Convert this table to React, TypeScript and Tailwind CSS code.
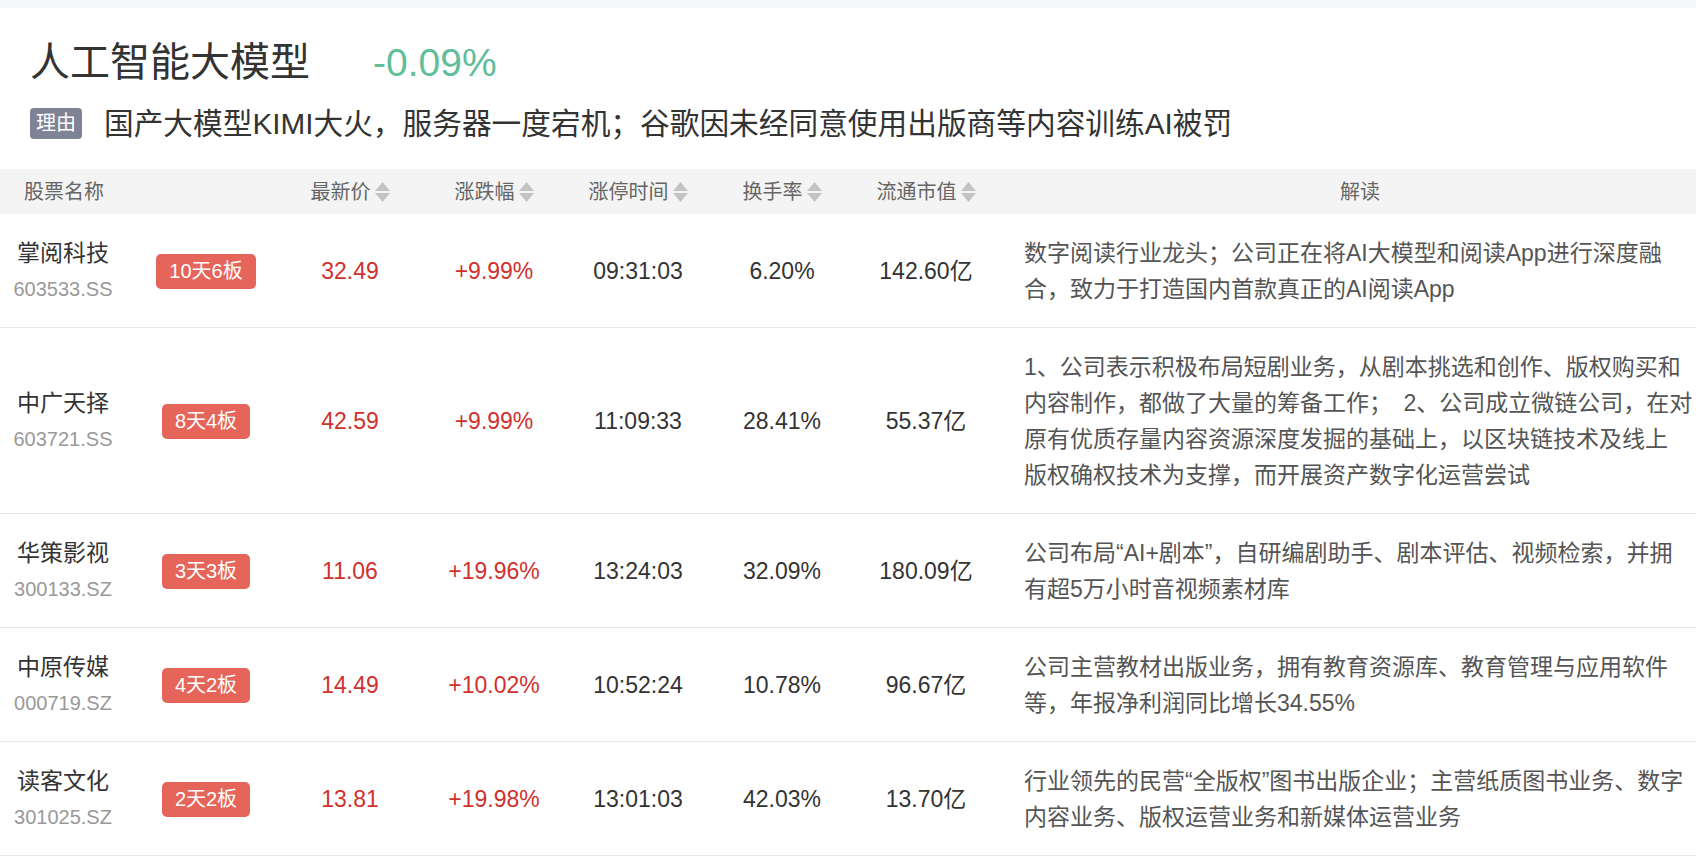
import React from "react";

const FONT = '"Liberation Sans", "Noto Sans CJK SC", Arial, sans-serif';

type Row = {
  name: string;
  code: string;
  tag: string;
  price: string;
  change: string;
  time: string;
  turnover: string;
  cap: string;
  lines: string[];
};

const rows: Row[] = [
  {
    name: "掌阅科技",
    code: "603533.SS",
    tag: "10天6板",
    price: "32.49",
    change: "+9.99%",
    time: "09:31:03",
    turnover: "6.20%",
    cap: "142.60亿",
    lines: [
      "数字阅读行业龙头；公司正在将AI大模型和阅读App进行深度融",
      "合，致力于打造国内首款真正的AI阅读App",
    ],
  },
  {
    name: "中广天择",
    code: "603721.SS",
    tag: "8天4板",
    price: "42.59",
    change: "+9.99%",
    time: "11:09:33",
    turnover: "28.41%",
    cap: "55.37亿",
    lines: [
      "1、公司表示积极布局短剧业务，从剧本挑选和创作、版权购买和",
      "内容制作，都做了大量的筹备工作；\u30002、公司成立微链公司，在对",
      "原有优质存量内容资源深度发掘的基础上，以区块链技术及线上",
      "版权确权技术为支撑，而开展资产数字化运营尝试",
    ],
  },
  {
    name: "华策影视",
    code: "300133.SZ",
    tag: "3天3板",
    price: "11.06",
    change: "+19.96%",
    time: "13:24:03",
    turnover: "32.09%",
    cap: "180.09亿",
    lines: [
      "公司布局“AI+剧本”，自研编剧助手、剧本评估、视频检索，并拥",
      "有超5万小时音视频素材库",
    ],
  },
  {
    name: "中原传媒",
    code: "000719.SZ",
    tag: "4天2板",
    price: "14.49",
    change: "+10.02%",
    time: "10:52:24",
    turnover: "10.78%",
    cap: "96.67亿",
    lines: [
      "公司主营教材出版业务，拥有教育资源库、教育管理与应用软件",
      "等，年报净利润同比增长34.55%",
    ],
  },
  {
    name: "读客文化",
    code: "301025.SZ",
    tag: "2天2板",
    price: "13.81",
    change: "+19.98%",
    time: "13:01:03",
    turnover: "42.03%",
    cap: "13.70亿",
    lines: [
      "行业领先的民营“全版权”图书出版企业；主营纸质图书业务、数字",
      "内容业务、版权运营业务和新媒体运营业务",
    ],
  },
];

function SortIcon() {
  return (
    <svg width="15" height="20" viewBox="0 0 15 20" className="ml-[4px] shrink-0">
      <polygon points="0,9 7.5,0 15,9" fill="#c3c3c3" />
      <polygon points="0,11 7.5,20 15,11" fill="#c3c3c3" />
    </svg>
  );
}

function HeadCell({ label }: { label: string }) {
  return (
    <div className="w-[144px] shrink-0 flex items-center justify-center">
      <span>{label}</span>
      <SortIcon />
    </div>
  );
}

export default function App() {
  return (
    <div className="w-[1696px] min-h-[859px] bg-white text-[#333]" style={{ fontFamily: FONT }}>
      <div className="h-[8px] bg-[#f6f7f9]" />
      <div className="pl-[30px] pt-[30px] pb-[30px]">
        <div className="flex items-baseline">
          <span className="text-[40px] leading-[48px] text-[#333]">人工智能大模型</span>
          <span className="ml-[63px] text-[39px] leading-[48px] text-[#62bd9a]">-0.09%</span>
        </div>
        <div className="mt-[21px] flex items-center h-[31px]">
          <span className="h-[31px] px-[6px] rounded-[4px] bg-[#7f8396] text-white text-[20px] leading-[31px]">
            理由
          </span>
          <span className="ml-[22px] text-[29.7px] leading-[31px] text-[#333] whitespace-nowrap">
            国产大模型KIMI大火，服务器一度宕机；谷歌因未经同意使用出版商等内容训练AI被罚
          </span>
        </div>
      </div>

      <div className="flex h-[45px] bg-[#f4f4f4] text-[20px] text-[#666] items-center">
        <div className="w-[278px] shrink-0 pl-[24px]">股票名称</div>
        <HeadCell label="最新价" />
        <HeadCell label="涨跌幅" />
        <HeadCell label="涨停时间" />
        <HeadCell label="换手率" />
        <HeadCell label="流通市值" />
        <div className="flex-1 pl-[26px] text-center">解读</div>
      </div>

      {rows.map((r) => (
        <div
          key={r.code}
          className="flex items-center pt-[21px] pb-[20px] border-b border-[#e8e8e8] text-[23px]"
        >
          <div className="w-[134px] shrink-0 pr-[8px] flex flex-col items-center">
            <span className="text-[23px] leading-[36px] text-[#333]">{r.name}</span>
            <span className="text-[20px] leading-[36px] text-[#999]">{r.code}</span>
          </div>
          <div className="w-[144px] shrink-0 flex justify-center">
            <span className="h-[35px] px-[13px] rounded-[5px] bg-[#e5655a] text-white text-[20px] leading-[35px]">
              {r.tag}
            </span>
          </div>
          <div className="w-[144px] shrink-0 text-center text-[#d0312d]">{r.price}</div>
          <div className="w-[144px] shrink-0 text-center text-[#d0312d]">{r.change}</div>
          <div className="w-[144px] shrink-0 text-center text-[#333]">{r.time}</div>
          <div className="w-[144px] shrink-0 text-center text-[#333]">{r.turnover}</div>
          <div className="w-[144px] shrink-0 text-center text-[#333]">{r.cap}</div>
          <div className="flex-1 pl-[26px] text-[23px] leading-[36px] text-[#555] whitespace-nowrap">
            {r.lines.map((l, i) => (
              <div key={i}>{l}</div>
            ))}
          </div>
        </div>
      ))}
    </div>
  );
}
